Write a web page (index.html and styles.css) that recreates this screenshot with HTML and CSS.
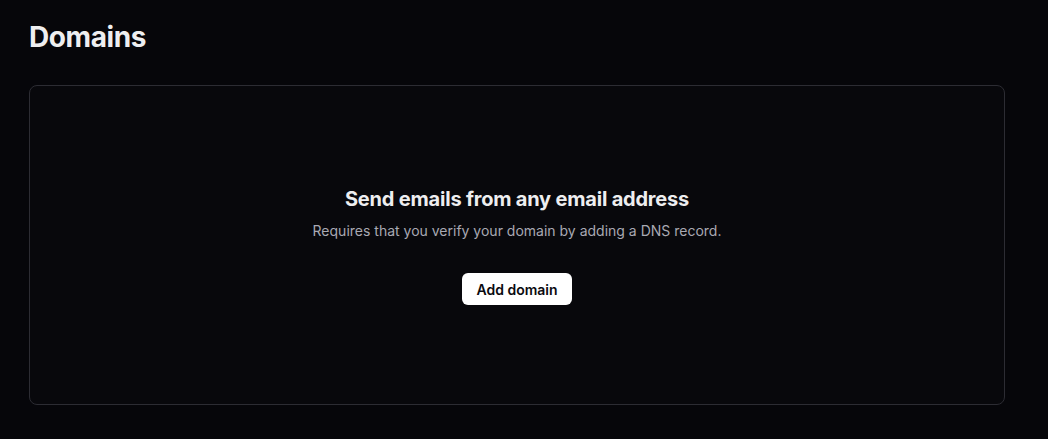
FILE: index.html
```html
<!DOCTYPE html>
<html>
<head>
<meta charset="utf-8">
<link rel="stylesheet" href="styles.css">
</head>
<body>
<main class="page">
  <h1 class="title">Domains</h1>
  <section class="card">
    <h2 class="card-title">Send emails from any email address</h2>
    <p class="card-text">Requires that you verify your domain by adding a DNS record.</p>
    <button class="btn">Add domain</button>
  </section>
</main>
</body>
</html>
```
FILE: styles.css
```css
html, body {
  margin: 0;
  padding: 0;
  background: #06060a;
  font-family: Inter, "Noto Sans", sans-serif;
  color: #ededef;
}
.page {
  padding: 19px 43px 0 29px;
}
.title {
  margin: 0;
  font-size: 28px;
  line-height: 36px;
  font-weight: 700;
  letter-spacing: -0.4px;
  color: #eeeef0;
}
.card {
  margin-top: 30px;
  height: 318px;
  border: 1px solid #2c2c33;
  border-radius: 8px;
  background: #08080c;
  display: flex;
  flex-direction: column;
  align-items: center;
  justify-content: center;
}
.card-title {
  margin: 0;
  font-size: 20px;
  line-height: 28px;
  font-weight: 700;
  letter-spacing: -0.2px;
  color: #eeeef0;
}
.card-text {
  margin: 8px 0 0;
  font-size: 14px;
  line-height: 20px;
  color: #a9a9b3;
}
.btn {
  margin-top: 32px;
  height: 32px;
  padding: 0 14px;
  border: none;
  border-radius: 6px;
  background: #ffffff;
  color: #0a0a0f;
  font-family: Inter, sans-serif;
  font-size: 14px;
  font-weight: 600;
  cursor: pointer;
}
```
